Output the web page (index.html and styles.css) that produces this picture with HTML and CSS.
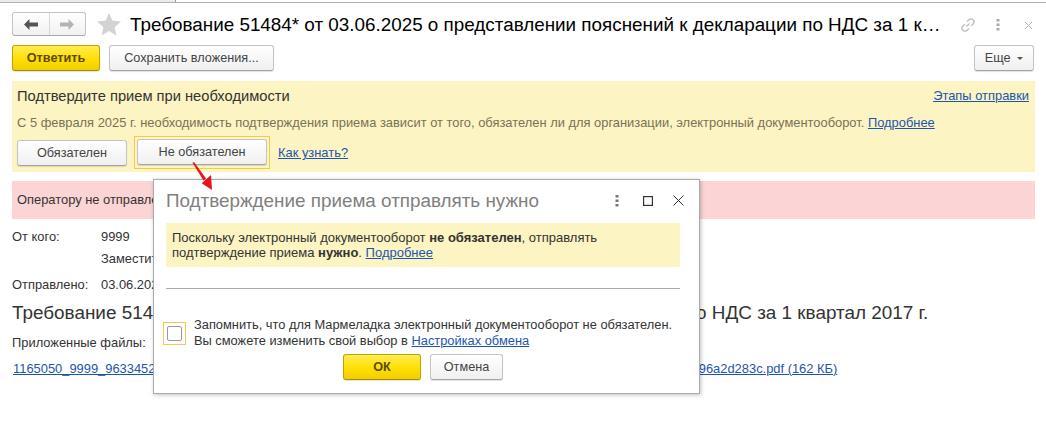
FILE: index.html
```html
<!DOCTYPE html>
<html lang="ru">
<head>
<meta charset="utf-8">
<title>Требование 51484*</title>
<link rel="stylesheet" href="styles.css">
</head>
<body>
<div class="page">
  <div class="tabline"><div class="tab"></div></div>
  <header class="titlebar">
    <div class="navgroup">
      <button class="navbtn"><svg width="14" height="11" viewBox="0 0 14 11"><path d="M0 5.500L5.500 0v3.500H14v4H5.500V11z" fill="#555"/></svg></button>
      <button class="navbtn"><svg width="14" height="11" viewBox="0 0 14 11"><path d="M14 5.500L8.500 0v3.500H0v4h8.500V11z" fill="#b4b4b4"/></svg></button>
    </div>
    <svg class="star" width="24" height="24" viewBox="0 0 24 24"><path d="M12 1l3.400 7.600 8.600.9-6.400 5.700 1.800 8.300L12 19l-7.400 4.500 1.800-8.300L0 9.500l8.600-.9z" fill="#d3d3d3"/></svg>
    <h1 class="title">Требование 51484* от 03.06.2025 о представлении пояснений к декларации по НДС за 1 квартал 2017 г.</h1>
    <div class="winicons">
      <svg width="16" height="16" viewBox="0 0 16 16" fill="none" stroke="#bdbdbd" stroke-width="1.300"><path d="M6.500 9.500l3-3M7 4.500l1.800-1.800a3 3 0 0 1 4.300 4.300L11.300 8.800M9 11.500l-1.800 1.800a3 3 0 0 1-4.300-4.300L4.700 7.200"/></svg>
      <svg class="win-dots" width="4" height="12" viewBox="0 0 4 12" fill="#a8a8a8"><rect x="0.500" width="3" height="2.500"/><rect x="0.500" y="4.500" width="3" height="2.500"/><rect x="0.500" y="9" width="3" height="2.500"/></svg>
      <svg class="win-close" width="9" height="9" viewBox="0 0 10 10" stroke="#b4b4b4" stroke-width="1.100"><path d="M1 1l8 8M9 1l-8 8"/></svg>
    </div>
  </header>
  <div class="toolbar">
    <button class="btn primary reply">Ответить</button>
    <button class="btn save">Сохранить вложения...</button>
    <button class="btn more">Еще <span class="caret"></span></button>
  </div>
  <section class="notice">
    <div class="notice-head"><span>Подтвердите прием при необходимости</span><a href="#">Этапы отправки</a></div>
    <p class="notice-text">С 5 февраля 2025 г. необходимость подтверждения приема зависит от того, обязателен ли для организации, электронный документооборот. <a href="#">Подробнее</a></p>
    <div class="notice-actions">
      <button class="btn must">Обязателен</button>
      <span class="focus"><button class="btn notmust">Не обязателен</button></span>
      <a href="#">Как узнать?</a>
    </div>
  </section>
  <div class="alert">Оператору не отправлено подтверждение приема требования</div>
  <div class="fields">
    <div class="field"><span class="label">От кого:</span><span>9999</span></div>
    <div class="field"><span class="label"></span><span>Заместитель начальника</span></div>
    <div class="field sent"><span class="label">Отправлено:</span><span>03.06.2025</span></div>
  </div>
  <h2 class="doc-title">Требование 51484* от 03.06.2025 о представлении пояснений к декларации по НДС за 1 квартал 2017 г.</h2>
  <div class="files-label">Приложенные файлы:</div>
  <a class="file" href="#">1165050_9999_9633452d10bbf0a7e4c1c88f4e6b7a2f3d0c6e18b9a4f7d21c53e80ab6d4f19c7e2b4d6f8a1c3e5d7f9b0ca96a2d283c.pdf (162 КБ)</a>
</div>

<svg class="arrow" width="24" height="30" viewBox="0 0 24 30"><path d="M0.500 0.800L2 0l12 16.500-2.500 2z" fill="#e8141c"/><path d="M20 28L9.700 21.300 19 13z" fill="#e8141c"/></svg>

<div class="dialog">
  <div class="dialog-head">
    <div class="dialog-title">Подтверждение приема отправлять нужно</div>
    <div class="dialog-icons">
      <svg class="d-dots" width="4" height="12" viewBox="0 0 4 12" fill="#777"><rect x="0.500" width="3" height="2.500"/><rect x="0.500" y="4.500" width="3" height="2.500"/><rect x="0.500" y="9" width="3" height="2.500"/></svg>
      <svg class="d-max" width="10" height="10" viewBox="0 0 10 10" fill="none" stroke="#333" stroke-width="1.200"><rect x="0.600" y="0.600" width="8.800" height="8.800"/></svg>
      <svg class="d-close" width="11" height="11" viewBox="0 0 11 11" stroke="#333" stroke-width="1"><path d="M0.500 0.500l10 10M10.500 0.500l-10 10"/></svg>
    </div>
  </div>
  <div class="dialog-note">Поскольку электронный документооборот <b>не обязателен</b>, отправлять<br>подтверждение приема <b>нужно</b>. <a href="#">Подробнее</a></div>
  <hr class="dialog-rule">
  <div class="remember">
    <span class="check-focus"><span class="check"></span></span>
    <div>Запомнить, что для Мармеладка электронный документооборот не обязателен.<br>Вы сможете изменить свой выбор в <a href="#">Настройках обмена</a></div>
  </div>
  <div class="dialog-actions">
    <button class="btn primary ok">ОК</button>
    <button class="btn cancel">Отмена</button>
  </div>
</div>
</body>
</html>
```

FILE: styles.css
```css
* { box-sizing: border-box; }
html, body { margin: 0; padding: 0; }
body {
  width: 1046px;
  height: 425px;
  overflow: hidden;
  position: relative;
  background: #fff;
  font-family: "Liberation Sans", Arial, sans-serif;
  font-size: 12.9px;
  color: #333;
}
a { color: #1c55b0; text-decoration: underline; }
.page { width: 1046px; }
.tabline { height: 3px; border-bottom: 1px solid #b0b0b0; }
.tab { width: 176px; height: 2px; background: #ececec; border-right: 1px solid #999; }
.titlebar {
  display: flex;
  align-items: center;
  height: 30px;
  margin-top: 6px;
  padding-left: 12px;
}
.navgroup {
  display: flex;
  width: 74px;
  height: 24px;
  border: 1px solid #c4c4c4;
  border-bottom-color: #a8a8a8;
  border-radius: 3px;
  background: linear-gradient(#fff, #f1f1f1);
}
.navbtn {
  flex: 1;
  padding: 0;
  border: 0;
  background: none;
  display: flex;
  align-items: center;
  justify-content: center;
}
.navbtn + .navbtn { border-left: 1px solid #d8d8d8; }
.star { margin-left: 11px; flex: none; }
.title {
  margin: 0 0 0 9px;
  padding-top: 2px;
  width: 813px;
  font-size: 18.85px;
  font-weight: 400;
  color: #000;
  white-space: nowrap;
  overflow: hidden;
  text-overflow: ellipsis;
}
.winicons {
  display: flex;
  align-items: center;
  margin-left: 17px;
  padding-top: 2px;
}
.win-dots { margin-left: 20px; }
.win-close { margin-left: 24px; }
.btn {
  font-family: inherit;
  font-size: 12.7px;
  color: #444;
  height: 26px;
  padding: 0;
  border: 1px solid #c4c4c4;
  border-bottom-color: #a4a4a4;
  border-radius: 3px;
  background: linear-gradient(#fff, #f0f0f0);
  box-shadow: 0 1px 1px rgba(0,0,0,.12);
}
.btn.primary {
  font-weight: 700;
  color: #5c4a00;
  border-color: #c2a100;
  border-bottom-color: #a88c00;
  background: linear-gradient(#ffec55, #ffdf00 55%, #f0cf00);
}
.toolbar {
  display: flex;
  align-items: center;
  padding: 0 12px;
  margin-top: 6px;
}
.reply { width: 88px; }
.save { width: 165px; margin-left: 9px; }
.more { width: 60px; margin-left: auto; }
.caret {
  display: inline-block;
  margin-left: 3px;
  vertical-align: middle;
  border: 3px solid transparent;
  border-top: 3px solid #555;
  border-bottom: 0;
}
.notice {
  margin: 10px 11px 0 12px;
  height: 91px;
  background: #fcf4c2;
  padding: 6px 6px 0 5px;
}
.notice-head {
  display: flex;
  justify-content: space-between;
  font-size: 14.7px;
  line-height: 18px;
}
.notice-head a { font-size: 12.9px; }
.notice-text {
  margin: 11px 0 0;
  line-height: 14px;
  color: #7a7158;
}
.notice-actions {
  display: flex;
  align-items: center;
  margin-top: 6px;
}
.must { width: 110px; }
.focus {
  display: block;
  margin-left: 7px;
  padding: 2px;
  border: 1px solid #f5c94a;
  height: 33px;
  width: 136px;
  margin-right: 8px;
}
.notmust { width: 130px; display: block; }
.alert {
  margin: 9px 11px 0 12px;
  height: 38px;
  padding: 0 5px;
  background: #fbd5d5;
  line-height: 38px;
}
.fields { margin-top: 11px; padding-left: 12px; }
.field { display: flex; height: 22px; line-height: 14px; }
.field.sent { margin-top: 4px; }
.label { width: 89px; }
.doc-title {
  margin: 1px 0 0 12px;
  font-size: 18.9px;
  font-weight: 400;
  line-height: 24px;
  color: #333;
  white-space: nowrap;
}
.files-label { margin: 10px 0 0 12px; }
.file { display: block; margin: 11px 0 0 13px; white-space: nowrap; }
.arrow { position: absolute; left: 192px; top: 162px; z-index: 2; }
.dialog {
  position: absolute;
  left: 153px;
  top: 179px;
  width: 547px;
  height: 215px;
  background: #fff;
  border: 1px solid #aaa;
  box-shadow: 1px 1px 4px rgba(0,0,0,.25);
  padding: 0 19px 0 12px;
}
.dialog-head {
  display: flex;
  justify-content: space-between;
  align-items: center;
  height: 41px;
}
.dialog-title { font-size: 18.85px; color: #808080; }
.dialog-icons {
  display: flex;
  align-items: center;
  margin-right: -4px;
}
.d-max { margin-left: 24px; }
.d-close { margin-left: 20px; }
.dialog-note {
  margin-top: 2px;
  height: 44px;
  padding: 7px 6px;
  background: #fcf4c2;
  font-size: 13px;
  line-height: 15px;
}
.dialog-rule {
  margin: 21px 0 0;
  border: 0;
  border-top: 1px solid #aaa;
}
.remember {
  display: flex;
  align-items: center;
  margin: 28px 0 0 -3px;
  font-size: 12.85px;
  line-height: 16px;
}
.check-focus {
  display: block;
  flex: none;
  width: 23px;
  height: 23px;
  padding: 3px;
  border: 1px solid #f5c94a;
  margin-right: 8px;
}
.check {
  display: block;
  width: 15px;
  height: 15px;
  border: 1px solid #999;
  border-radius: 2px;
}
.dialog-actions {
  display: flex;
  justify-content: center;
  gap: 9px;
  margin-top: 5px;
}
.ok { width: 78px; }
.cancel { width: 73px; }
```
